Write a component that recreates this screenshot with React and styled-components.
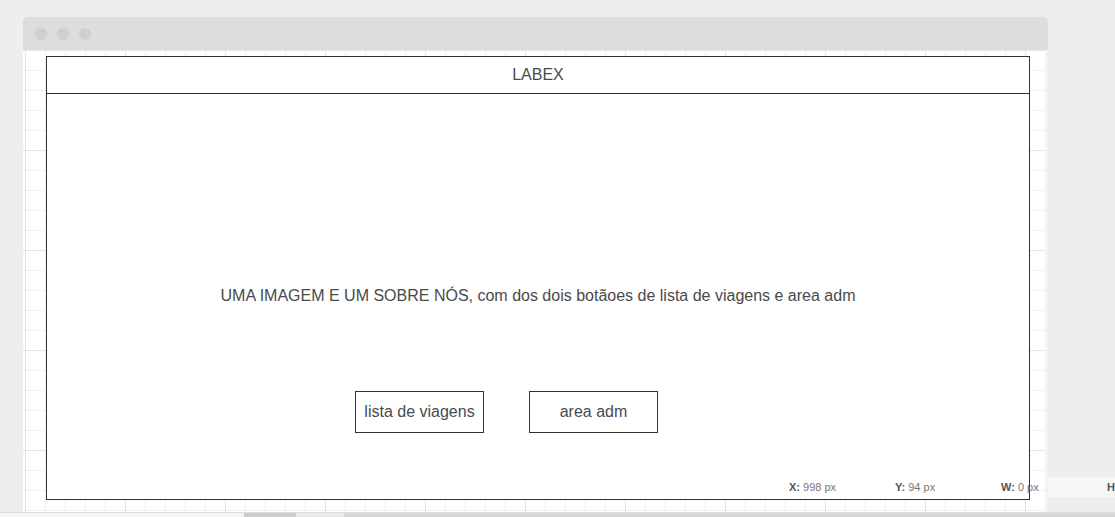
import React from 'react';
import styled, { createGlobalStyle } from 'styled-components';

const GlobalStyle = createGlobalStyle`
  html, body {
    margin: 0;
    padding: 0;
    background: #eeeeee;
    overflow: hidden;
  }
  body {
    font-family: "Liberation Sans", Arial, Helvetica, sans-serif;
  }
`;

const Page = styled.div`
  position: relative;
  width: 1115px;
  height: 517px;
  background: #eeeeee;
  overflow: hidden;
  display: flex;
  flex-direction: column;
`;

const Window = styled.div`
  margin: 17px 0 0 23px;
  width: 1025px;
  display: flex;
  flex-direction: column;
`;

const TitleBar = styled.div`
  height: 33px;
  background: #dddddd;
  border-radius: 5px 5px 0 0;
  display: flex;
  align-items: center;
  gap: 10px;
  padding-left: 12px;
  box-sizing: border-box;
`;

const Dot = styled.span`
  width: 12px;
  height: 12px;
  border-radius: 50%;
  background: #cfcfcf;
`;

const Canvas = styled.div`
  height: 462px;
  box-sizing: border-box;
  padding: 6px 0 0 23px;
  border-right: 3px solid #f2f2f2;
  background-color: #ffffff;
  background-image:
    linear-gradient(to right, #e4e4e4 1px, transparent 1px),
    linear-gradient(to bottom, #e4e4e4 1px, transparent 1px),
    linear-gradient(to right, #f0f0f0 1px, transparent 1px),
    linear-gradient(to bottom, #f0f0f0 1px, transparent 1px);
  background-size: 100px 100px, 100px 100px, 20px 20px, 20px 20px;
  background-position: 2px 0, 0 0, 2px 0, 0 0;
`;

const Frame = styled.div`
  width: 984px;
  height: 444px;
  box-sizing: border-box;
  border: 1px solid #333333;
  background: #ffffff;
  display: flex;
  flex-direction: column;
`;

const Header = styled.div`
  height: 37px;
  box-sizing: border-box;
  border-bottom: 1px solid #333333;
  display: flex;
  align-items: center;
  justify-content: center;
  font-size: 16px;
  color: #4a4a4a;
`;

const Body = styled.div`
  flex: 1;
  display: flex;
  flex-direction: column;
  padding-top: 193px;
`;

const About = styled.p`
  margin: 0;
  text-align: center;
  font-size: 16px;
  line-height: 18px;
  color: #4a4a4a;
`;

const ButtonRow = styled.div`
  display: flex;
  gap: 45px;
  margin-top: 86px;
  padding-left: 308px;
`;

const Button = styled.button`
  width: 129px;
  height: 42px;
  box-sizing: border-box;
  border: 1px solid #333333;
  background: #ffffff;
  font-family: inherit;
  font-size: 16px;
  color: #4a4a4a;
  padding: 0;
`;

const Divider = styled.div`
  height: 1px;
  background: #dddddd;
`;

const BottomBar = styled.div`
  height: 4px;
  display: flex;
`;

const Segment = styled.div`
  width: ${(p) => (p.$w ? `${p.$w}px` : 'auto')};
  flex: ${(p) => (p.$w ? 'none' : '1')};
  background: ${(p) => p.$bg};
`;

const StatusBar = styled.div`
  position: absolute;
  left: 789px;
  top: 477px;
  height: 20px;
  display: flex;
  align-items: center;
  font-size: 11px;
  color: #777777;
`;

const StatusStrip = styled.div`
  position: absolute;
  left: 1048px;
  top: 477px;
  width: 67px;
  height: 20px;
  background: #f6f6f6;
`;

const StatusItem = styled.span`
  width: 106px;
  white-space: nowrap;
  b {
    color: #555555;
  }
`;

export default function App() {
  return (
    <>
      <GlobalStyle />
      <Page>
        <Window>
          <TitleBar>
            <Dot />
            <Dot />
            <Dot />
          </TitleBar>
          <Canvas>
            <Frame>
              <Header>LABEX</Header>
              <Body>
                <About>
                  UMA IMAGEM E UM SOBRE NÓS, com dos dois botãoes de lista de viagens e area adm
                </About>
                <ButtonRow>
                  <Button>lista de viagens</Button>
                  <Button>area adm</Button>
                </ButtonRow>
              </Body>
            </Frame>
          </Canvas>
        </Window>
        <Divider />
        <BottomBar>
          <Segment $w={244} $bg="#f4f4f4" />
          <Segment $w={52} $bg="#cccccc" />
          <Segment $w={48} $bg="#ebebeb" />
          <Segment $bg="#d6d6d6" />
        </BottomBar>
        <StatusStrip />
        <StatusBar>
          <StatusItem><b>X:</b> 998 px</StatusItem>
          <StatusItem><b>Y:</b> 94 px</StatusItem>
          <StatusItem><b>W:</b> 0 px</StatusItem>
          <StatusItem><b>H</b></StatusItem>
        </StatusBar>
      </Page>
    </>
  );
}
